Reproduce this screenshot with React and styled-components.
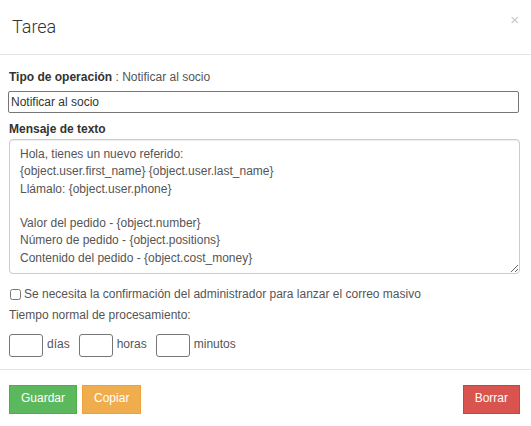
import styled, { createGlobalStyle } from "styled-components";

const GlobalStyle = createGlobalStyle`
  html, body {
    margin: 0;
    padding: 0;
    background: #fff;
  }
  body {
    font-family: "Liberation Sans", Arial, sans-serif;
    font-size: 12px;
    line-height: 1.42857;
    color: #555;
  }
  * {
    box-sizing: border-box;
  }
`;

const Modal = styled.div`
  width: 531px;
  background: #fff;
`;

const Header = styled.div`
  display: flex;
  justify-content: space-between;
  align-items: flex-start;
  padding: 14px 12px 14px 12px;
  border-bottom: 1px solid #e5e5e5;
`;

const Title = styled.h4`
  margin: 0;
  font-family: Roboto, "Liberation Sans", sans-serif;
  font-weight: 300;
  font-size: 18px;
  line-height: 26px;
  color: #333;
`;

const Close = styled.button`
  border: 0;
  background: none;
  padding: 0;
  margin: -2px 0 0 0;
  font-family: "Liberation Sans", Arial, sans-serif;
  font-size: 15px;
  line-height: 16px;
  color: #c8c8c8;
  cursor: pointer;
`;

const Body = styled.div`
  padding: 14px 11px 12px 9px;
`;

const Label = styled.div`
  color: #555;
  margin: ${(p) => p.$mt || 0}px 0 0 0;
  b {
    color: #333;
    font-weight: 700;
  }
`;

const TextInput = styled.input`
  display: block;
  width: 511px;
  height: 22px;
  margin: 5px 0 0 -1px;
  padding: 1px 2px;
  font: inherit;
  color: #333;
  border: 1px solid #767676;
  border-radius: 2px;
`;

const Message = styled.textarea`
  display: block;
  width: 511px;
  height: 135px;
  margin: 1px 0 0 0;
  padding: 6px 10px;
  font: inherit;
  line-height: 17.2px;
  color: #555;
  border: 1px solid #ccc;
  border-radius: 4px;
  box-shadow: inset 0 1px 1px rgba(0, 0, 0, 0.075);
  resize: vertical;
`;

const CheckRow = styled.label`
  display: flex;
  align-items: center;
  gap: 3px;
  margin-top: 12px;
  input {
    margin: 0 0 0 1px;
    width: 11px;
    height: 11px;
  }
`;

const TimeRow = styled.div`
  display: flex;
  align-items: center;
  margin-top: 9px;
`;

const TimeInput = styled.input`
  width: 34px;
  height: 23px;
  margin-right: 4px;
  padding: 1px 2px;
  font: inherit;
  border: 1px solid #767676;
  border-radius: 3px;
`;

const Unit = styled.span`
  margin-right: ${(p) => p.$gap || 0}px;
`;

const Footer = styled.div`
  display: flex;
  align-items: center;
  gap: 5px;
  padding: 15px 11px 13px 9px;
  border-top: 1px solid #e5e5e5;
`;

const Button = styled.button`
  height: 29px;
  padding: 0 ${(p) => p.$px || 11}px;
  font: inherit;
  font-size: 12px;
  color: #fff;
  background: ${(p) => p.$bg};
  border: 1px solid ${(p) => p.$border};
  border-radius: 0;
  cursor: pointer;
  ${(p) => (p.$push ? "margin-left: auto;" : "")}
`;

export default function App() {
  return (
    <Modal>
      <GlobalStyle />
      <Header>
        <Title>Tarea</Title>
        <Close>×</Close>
      </Header>
      <Body>
        <Label>
          <b>Tipo de operación</b> : Notificar al socio
        </Label>
        <TextInput defaultValue="Notificar al socio" />
        <Label $mt={8}>
          <b>Mensaje de texto</b>
        </Label>
        <Message
          defaultValue={
            "Hola, tienes un nuevo referido:\n{object.user.first_name} {object.user.last_name}\nLlámalo: {object.user.phone}\n\nValor del pedido - {object.number}\nNúmero de pedido - {object.positions}\nContenido del pedido - {object.cost_money}"
          }
        />
        <CheckRow>
          <input type="checkbox" />
          Se necesita la confirmación del administrador para lanzar el correo masivo
        </CheckRow>
        <Label $mt={4}>Tiempo normal de procesamiento:</Label>
        <TimeRow>
          <TimeInput />
          <Unit $gap={9}>días</Unit>
          <TimeInput />
          <Unit $gap={9}>horas</Unit>
          <TimeInput />
          <Unit>minutos</Unit>
        </TimeRow>
      </Body>
      <Footer>
        <Button $bg="#5cb85c" $border="#4cae4c">Guardar</Button>
        <Button $bg="#f0ad4e" $border="#eea236">Copiar</Button>
        <Button $bg="#d9534f" $border="#d43f3a" $push>
          Borrar
        </Button>
      </Footer>
    </Modal>
  );
}
